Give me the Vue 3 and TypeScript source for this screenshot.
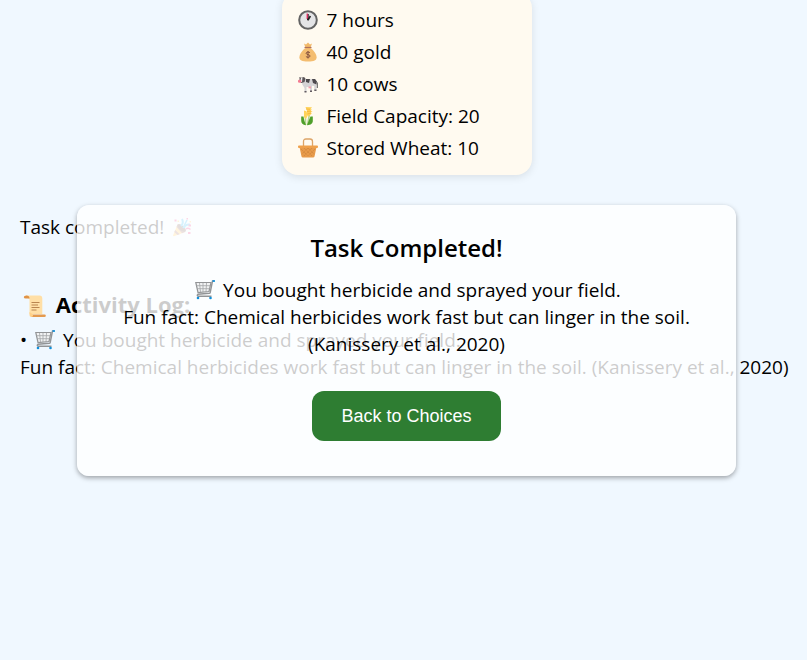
<script setup lang="ts">
import { ref } from 'vue'

interface Stat {
  icon: string
  text: string
}

const stats: Stat[] = [
  { icon: 'clock', text: '7 hours' },
  { icon: 'money', text: '40 gold' },
  { icon: 'cow', text: '10 cows' },
  { icon: 'wheat', text: 'Field Capacity: 20' },
  { icon: 'basket', text: 'Stored Wheat: 10' },
]

const action = 'You bought herbicide and sprayed your field.'
const fact = 'Fun fact: Chemical herbicides work fast but can linger in the soil. (Kanissery et al., 2020)'
const showDialog = ref(true)
</script>

<template>
  <svg class="sprite" aria-hidden="true">
    <symbol id="clock" viewBox="0 0 20 20">
      <circle cx="10" cy="10" r="8.8" fill="#e4e4e6" stroke="#636363" stroke-width="2" />
      <path d="M10 10V4" stroke="#222" stroke-width="1.4" />
      <path d="M9.2 9V3.5" stroke="#f0245c" stroke-width="1.2" />
      <path d="M10 10l2.4-4" stroke="#222" stroke-width="1.6" />
      <circle cx="10" cy="9.6" r="1" fill="#222" />
    </symbol>
    <symbol id="money" viewBox="0 0 20 20">
      <path d="M6 1.5l2 1L10 .6l2 1.900 2-1-1.500 4.200h-5z" fill="#f2b868" />
      <path d="M7.600 6h4.800c3 2 6.200 6 6.200 9.300 0 3.200-2.400 4.200-8.600 4.200s-8.600-1-8.600-4.200C1.400 12 4.600 8 7.600 6z" fill="#f4bd70" />
      <path d="M6.500 5.500h7" stroke="#b0705a" stroke-width="1.200" />
      <path d="M12 10.800c-.6-1-3.900-1.100-3.900.5s4 1 4 2.700-3.500 1.600-4.200.4M10 9v7.500" fill="none" stroke="#85503e" stroke-width="1" />
    </symbol>
    <symbol id="cow" viewBox="0 0 20 20">
      <path d="M6 5l11 .3c1.500.4 1.500 2 1.500 4V16h-2.200v-4l-2.300-.3V17h-2v-4H8.500v5h-2v-4L4 10z" fill="#d5d3d5" />
      <path d="M8 5h4l-1 4-3-1zM14 5h3l1.500 2v3.500L15 9z" fill="#4c484c" />
      <path d="M18 7l1.300 2v5" fill="none" stroke="#555" stroke-width="1" />
      <path d="M1.300 3l2 .8L6 3l1.500 1.500-1 3.500L3.500 9 1 7.500l.6-2.300z" fill="#5b5558" />
      <path d="M3 4h1.400L4 8H2z" fill="#eee" />
      <rect y="5.800" width="3.300" height="3" rx="1.300" fill="#f37b91" />
      <path d="M10.500 12.500h2.500v1.800h-2.500z" fill="#f59bab" />
      <path d="M6.500 17h2v1.500h-2zM12 16.500h2V18h-2zM16.300 15.500h2.200V17h-2.200z" fill="#625b60" />
    </symbol>
    <symbol id="wheat" viewBox="0 0 20 20">
      <path d="M7.500 19V8M9.500 19l2-11" fill="none" stroke="#b5d58f" stroke-width="1.500" />
      <path d="M3.200 10.500h2.300l.8 4 1.700 4.700c-3.200-.2-5-2-4.800-4.700zM14.800 10.500h-2.300L11 14l-2 5.200c4 0 6-2 5.800-4.700z" fill="#4f9f2b" />
      <path d="M6 4.500l2.500.7L9 11l-1.500 2L6 11zM7.500 1l6.500.3-1.500 2 1.500.2-1.500 1.500 2 .2-2 1.800 1.500.5-2 1.500L10 11 8.500 8l.5-3z" fill="#ffd35a" />
      <path d="M8 3l4 .3M9 5.500l4-.5M9.500 8l3.500-1" stroke="#f2ae35" stroke-width=".7" />
    </symbol>
    <symbol id="basket" viewBox="0 0 20 20">
      <path d="M5.500 9V3.500Q5.500 1 8 1h4q2.500 0 2.500 2.500V9" fill="none" stroke="#dda467" stroke-width="1.300" />
      <path d="M1.500 9h17l-2 9.500q-.2 1-1.500 1H5q-1.300 0-1.500-1z" fill="#e79a4a" />
      <path d="M3 11l7 7M6 10l8 8M10 10l6 6M17 11l-7 7M14 10l-8 8M10 10l-6 6" stroke="#c98038" stroke-width=".8" stroke-dasharray="1 1" />
      <rect y="7.500" width="20" height="2.500" rx="1" fill="#efa04b" />
    </symbol>
    <symbol id="party" viewBox="0 0 20 20">
      <path d="M5.500 7.500L1 18.500q0 1 1 .8L13 15z" fill="#ffc95c" />
      <path d="M5.500 7.500l7.500 7.500-3 1.200L4.500 10zM3.200 13l4.500 4.200-2.200.9L2.300 15z" fill="#a5746e" />
      <path d="M5.500 7.500q2-1.500 6 2t1.500 5.500q-3 0-5.500-2.800T5.500 7.500z" fill="#7d5f58" />
      <path d="M9 9q3-3 1-7M12 11q1-4 6-3.500" fill="none" stroke="#38bdf5" stroke-width="2" />
      <path d="M11 11l4-8" stroke="#38bdf5" stroke-width="1.600" />
      <path d="M2.500 2.500h2v2h-2zM16.500 7.500H19v2h-2.500zM16 15h2.500v2H16zM14.500 1h1.500v1.500h-1.500z" fill="#f03a89" />
      <path d="M14 12q2-1.500 4.500.5" fill="none" stroke="#f03a89" stroke-width="1.500" />
      <path d="M5.500 3.500h1.500V5H5.500zM17.500 4H19v1.500h-1.500z" fill="#ffc95c" />
    </symbol>
    <symbol id="scroll" viewBox="0 0 24 24">
      <path d="M2.500 1.500h14q2.800 0 2.800 3V20H6.500V5.500z" fill="#ffdfa6" />
      <path d="M3.500 1.500Q.8 1.500.8 3t2 1.500h3.700q0-3-3-3z" fill="#e09346" />
      <path d="M8 20.500h13.500q1.300 0 1.300 1.200T21.500 23H8z" fill="#e49a4e" />
      <path d="M6.500 18v3q0 2 1.800 2t1.900-2.500z" fill="#ffd18a" />
      <path d="M8.500 8.500h8M8.500 11h6.500M8.500 13.500h8M8.500 16h5" stroke="#b98550" stroke-width="1" />
    </symbol>
    <symbol id="cart" viewBox="0 0 20 20">
      <path d="M.8 2.500H16L14 11.500l-11 1z" fill="#f1f2f3" stroke="#929496" stroke-width="1.200" />
      <path d="M4.500 3l1 9M8 3v9M11.500 3L11 12M1.500 5.700h14M2.200 8.700h12.500" stroke="#a2a4a6" stroke-width=".8" />
      <path d="M19 1h-1.500L15.200 12.500q-.2.700-1 .8L3 14.300q-1.500 1 0 1.900h13.500" fill="none" stroke="#929496" stroke-width="1.400" />
      <path d="M17.500 1H20" stroke="#128fda" stroke-width="1.700" />
      <circle cx="3" cy="18" r="1.300" fill="#128fda" />
      <circle cx="15.500" cy="18" r="1.300" fill="#128fda" />
    </symbol>
  </svg>

  <main class="page">
    <ul class="stats">
      <li v-for="stat in stats" :key="stat.icon">
        <svg class="icon" aria-hidden="true"><use :href="'#' + stat.icon" /></svg>
        <span>{{ stat.text }}</span>
      </li>
    </ul>

    <p class="status">
      Task completed!
      <svg class="icon" aria-hidden="true"><use href="#party" /></svg>
    </p>

    <section>
      <h3 class="log-title">
        <svg class="icon large" aria-hidden="true"><use href="#scroll" /></svg>
        Activity Log:
      </h3>
      <p class="entry">
        • <svg class="icon" aria-hidden="true"><use href="#cart" /></svg> {{ action }}<br />{{ fact }}
      </p>
    </section>
  </main>

  <div v-if="showDialog" class="dialog" role="dialog" aria-labelledby="dialog-title">
    <h2 id="dialog-title">Task Completed!</h2>
    <p>
      <svg class="icon" aria-hidden="true"><use href="#cart" /></svg> {{ action }}<br />{{ fact }}
    </p>
    <button type="button" @click="showDialog = false">Back to Choices</button>
  </div>
</template>

<style>
body {
  background: #f0f8ff;
}
</style>

<style scoped>
.sprite {
  position: absolute;
  width: 0;
  height: 0;
}

.page,
.dialog {
  font-family: "Segoe UI", "Open Sans", "Noto Sans", sans-serif;
  font-size: 19px;
  line-height: 27px;
  color: #000;
}

.page {
  display: flow-root;
  padding: 0 14px 0 20px;
}

.icon {
  width: 20px;
  height: 20px;
  margin: 0 3px;
  vertical-align: -3px;
}

.large {
  width: 24px;
  height: 24px;
  vertical-align: -5px;
}

.stats {
  box-sizing: border-box;
  width: 250px;
  margin: -8px auto 39px;
  padding: 12px 16px 11px;
  list-style: none;
  background: #fffaf0;
  border-radius: 16px;
  box-shadow: 0 2px 8px rgba(0, 0, 0, 0.1);
}

.stats li {
  display: flex;
  align-items: center;
  gap: 9px;
  height: 32px;
}

.stats .icon {
  margin: 0;
}

.status {
  margin: 0 0 50px;
}

.log-title {
  margin: 0 0 9px;
  font-size: 22px;
  line-height: 27px;
}

.entry {
  margin: 0;
}

.dialog {
  position: absolute;
  top: 205px;
  left: 77px;
  right: 71px;
  box-sizing: border-box;
  padding: 28px 40px 35px;
  text-align: center;
  background: rgba(255, 255, 255, 0.8);
  border-radius: 12px;
  box-shadow: 0 2px 5px rgba(0, 0, 0, 0.35);
}

.dialog h2 {
  margin: 0 0 14px;
  font-size: 24px;
  font-weight: 600;
  line-height: 30px;
}

.dialog p {
  margin: 0 0 33px;
}

.dialog button {
  height: 50px;
  padding: 0 29px;
  border: 0;
  border-radius: 12px;
  background: #2e7d32;
  color: #fff;
  font-family: Arial, "Liberation Sans", sans-serif;
  font-size: 18px;
  cursor: pointer;
}
</style>
